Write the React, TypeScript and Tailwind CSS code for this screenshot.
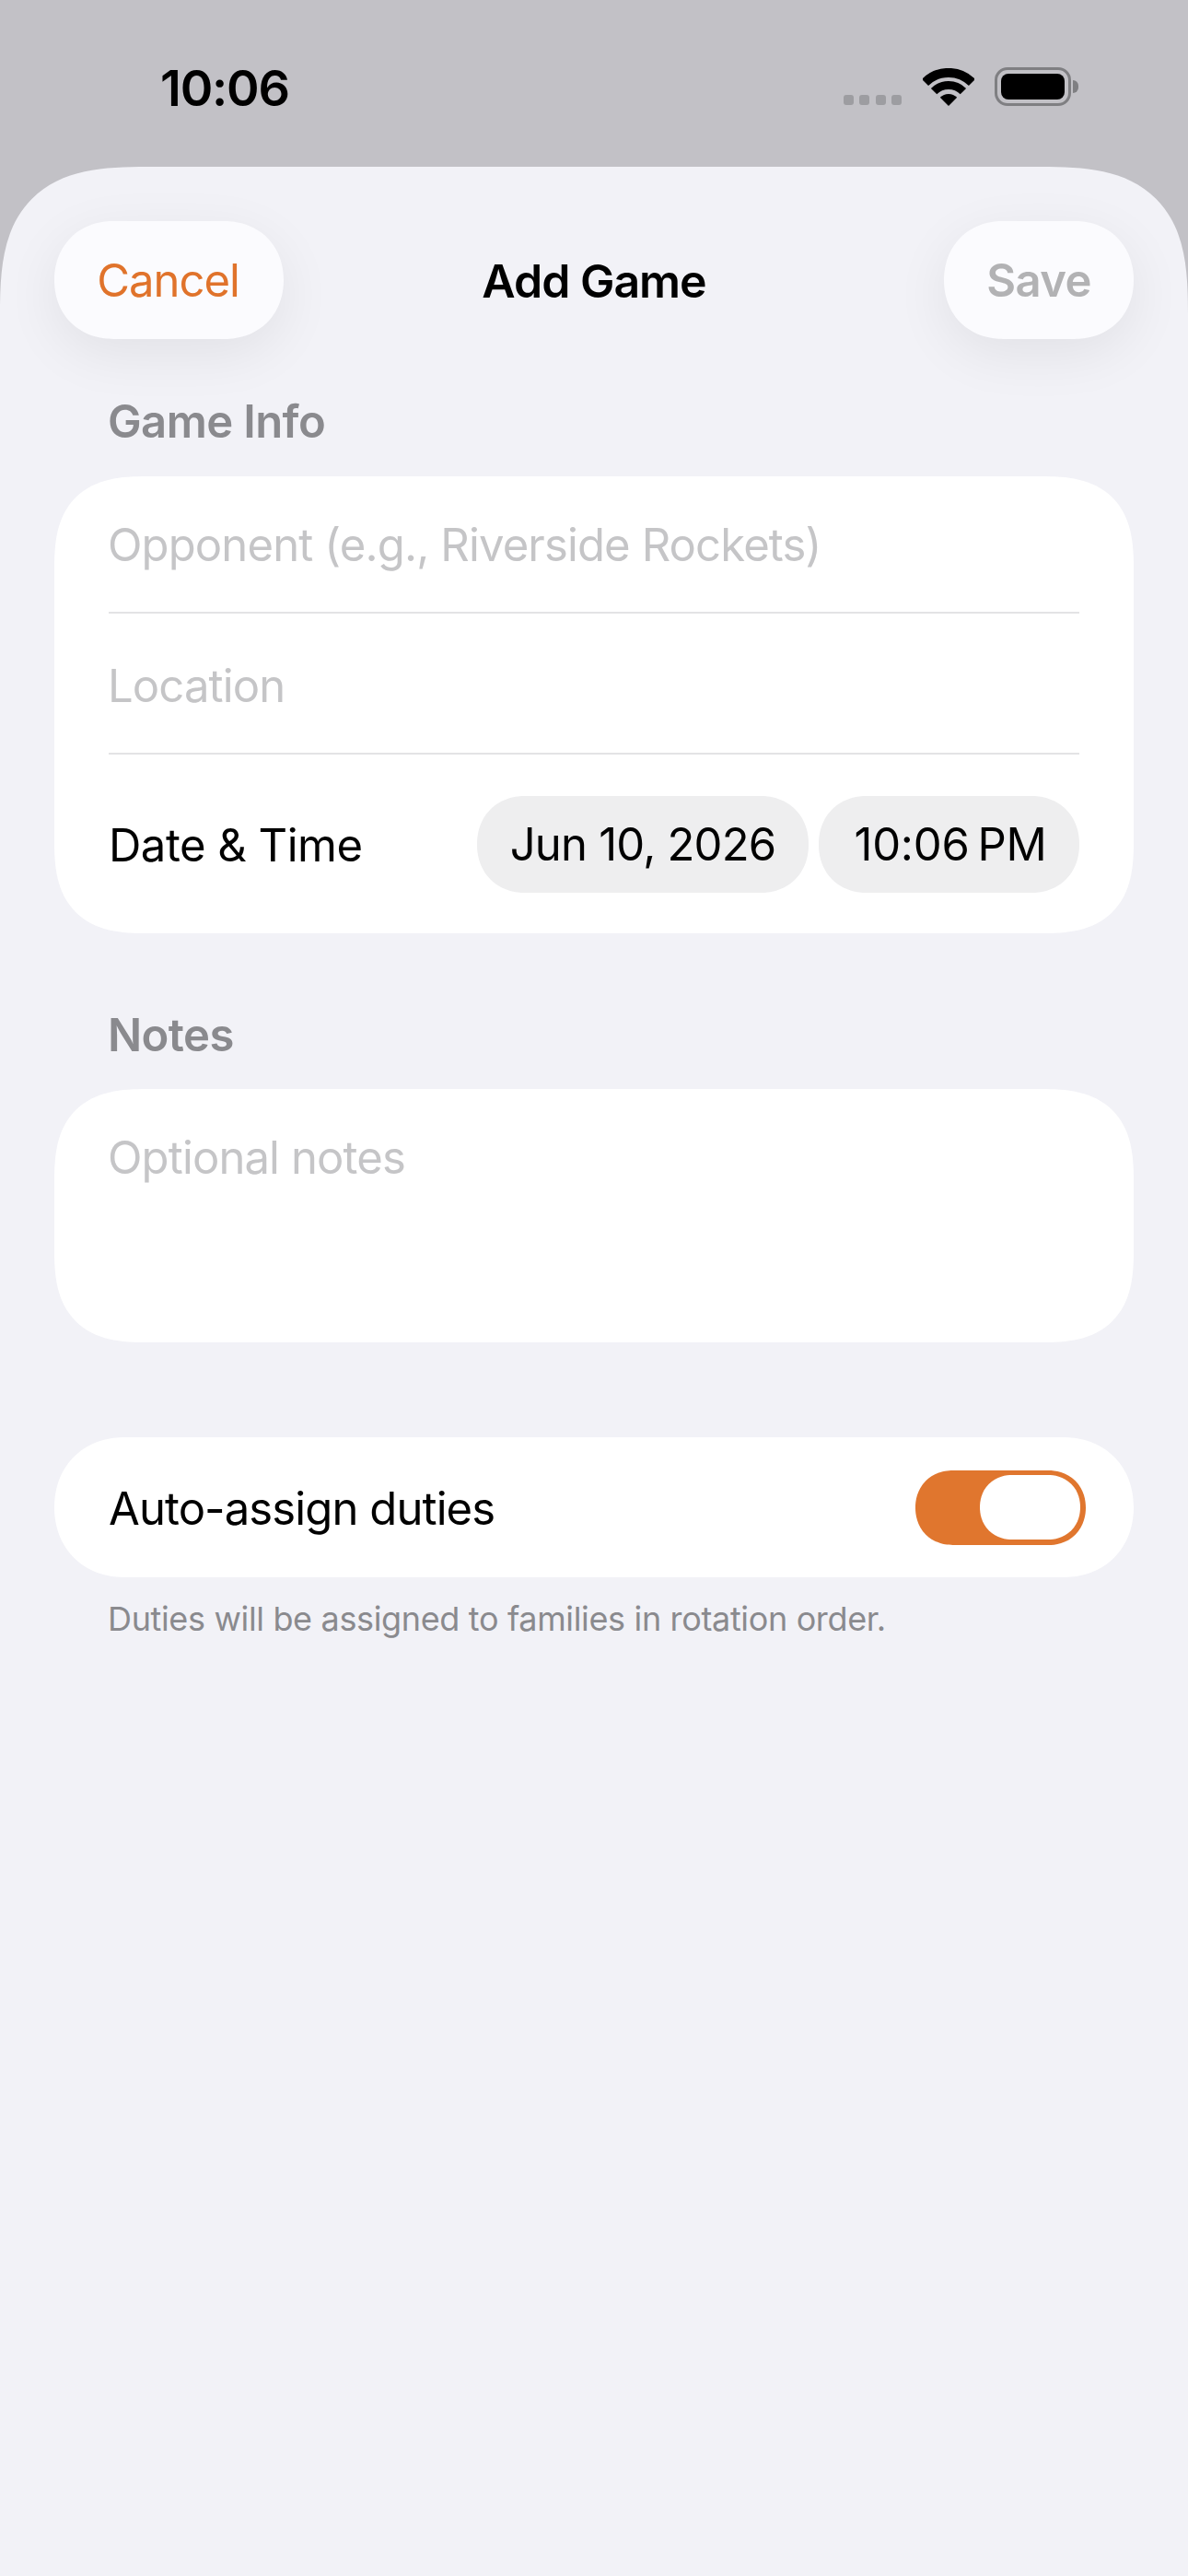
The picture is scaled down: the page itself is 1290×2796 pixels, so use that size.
const font = { fontFamily: "Inter, 'Noto Sans', sans-serif" };

const WifiIcon = () => (
  <svg width="56" height="41" viewBox="0 0 56 41" className="mt-[1px]">
    <path d="M2.5 15.5A36 36 0 0 1 53.5 15.5" fill="none" stroke="#000" strokeWidth="10" />
    <path d="M12.1 25.1A22.5 22.5 0 0 1 43.9 25.1" fill="none" stroke="#000" strokeWidth="9" />
    <path d="M28 41L18.8 31.8A13 13 0 0 1 37.2 31.8Z" fill="#000" />
  </svg>
);

const BatteryIcon = () => (
  <div className="flex items-center">
    <div className="h-[42px] w-[83px] rounded-[14px] border-[3px] border-[#7f7f82] p-[4px]">
      <div className="h-full w-full rounded-[8px] bg-black" />
    </div>
    <div className="ml-[2px] h-[14px] w-[6px] rounded-r-full bg-[#7f7f82]" />
  </div>
);

const Label = ({ children }: { children: string }) => (
  <div className="pl-[117px] text-[49px] leading-[60px] font-semibold tracking-[-0.6px] text-[#8a8a8e]">
    {children}
  </div>
);

const Placeholder = ({ children }: { children: string }) => (
  <span className="-ml-[1px] pt-[3px] text-[49px] leading-[60px] tracking-[-0.87px] text-[#c5c5c7]">{children}</span>
);

export default function App() {
  return (
    <div className="flex min-h-[2796px] w-[1290px] flex-col bg-[#c2c1c6]" style={font}>
      {/* Status bar */}
      <div className="flex h-[181px] items-start justify-between pr-[119px] pl-[174px]">
        <span className="mt-[62px] text-[54px] leading-[68px] font-semibold tracking-[-1.2px] text-black">
          10:06
        </span>
        <div className="mt-[73px] flex items-start">
          <div className="mt-[30px] flex gap-[6.5px]">
            {[0, 1, 2, 3].map((dot) => (
              <div key={dot} className="h-[11px] w-[11px] rounded-[3px] bg-[#9d9da1]" />
            ))}
          </div>
          <div className="ml-[23px]">
            <WifiIcon />
          </div>
          <div className="ml-[22px]">
            <BatteryIcon />
          </div>
        </div>
      </div>

      {/* Sheet */}
      <div className="flex-1 rounded-t-[160px] bg-[#f2f2f7] [corner-shape:superellipse(1.5)]">
        {/* Nav bar */}
        <div className="flex items-center px-[59px] pt-[59px]">
          <div className="flex flex-1 justify-start">
            <button className="h-[128px] w-[249px] rounded-[64px] bg-[#fbfbfe] pt-[2px] pr-[2px] text-[49px] tracking-[-1px] text-[#e0732b] shadow-[0_16px_60px_rgba(0,0,0,0.07)] [corner-shape:superellipse(1.08)]">
              Cancel
            </button>
          </div>
          <span className="pt-[2px] text-[50px] font-semibold tracking-[-1px] text-black">Add Game</span>
          <div className="flex flex-1 justify-end">
            <button className="h-[128px] w-[206px] rounded-[64px] bg-[#fbfbfe] pt-[2px] text-[49px] font-semibold tracking-[-0.6px] text-[#b2b2b4] shadow-[0_16px_60px_rgba(0,0,0,0.07)] [corner-shape:superellipse(1.08)]">
              Save
            </button>
          </div>
        </div>

        {/* Game Info */}
        <div className="mt-[60px]">
          <Label>Game Info</Label>
        </div>
        <div className="mx-[59px] mt-[29px] h-[496px] rounded-[100px] bg-white px-[59px] [corner-shape:superellipse(1.4)]">
          <div className="flex h-[149px] items-center border-b-2 border-[#e3e3e5]">
            <Placeholder>Opponent (e.g., Riverside Rockets)</Placeholder>
          </div>
          <div className="flex h-[153px] items-center border-b-2 border-[#e3e3e5] pt-[3px]">
            <Placeholder>Location</Placeholder>
          </div>
          <div className="flex h-[194px] items-center justify-between">
            <span className="pt-[3px] text-[49px] tracking-[-0.5px] text-black">Date &amp; Time</span>
            <div className="flex gap-[11px]">
              <div className="flex h-[105px] w-[360px] items-center justify-center rounded-[52px] bg-[#eeeeef] pt-[2px] text-[49px] tracking-[-0.8px] text-black [corner-shape:superellipse(1.08)]">
                Jun 10, 2026
              </div>
              <div className="flex h-[105px] w-[283px] items-center justify-center rounded-[52px] bg-[#eeeeef] pt-[2px] pl-[3px] text-[49px] tracking-[-0.2px] text-black [corner-shape:superellipse(1.08)]">
                10:06{"\u202F"}PM
              </div>
            </div>
          </div>
        </div>

        {/* Notes */}
        <div className="mt-[81px]">
          <Label>Notes</Label>
        </div>
        <div className="mx-[59px] mt-[28px] h-[275px] rounded-[100px] bg-white px-[59px] pt-[45px] [corner-shape:superellipse(1.4)]">
          <Placeholder>Optional notes</Placeholder>
        </div>

        {/* Auto-assign */}
        <div className="mx-[59px] mt-[103px] flex h-[152px] items-center justify-between rounded-[76px] bg-white pr-[52px] pl-[59px] [corner-shape:superellipse(1.08)]">
          <span className="pt-[3px] text-[49px] tracking-[-0.9px] text-black">Auto-assign duties</span>
          <div className="flex h-[81px] w-[185px] items-center justify-end rounded-[41px] bg-[#e0762e] pr-[6px] [corner-shape:superellipse(1.08)]">
            <div className="h-[70px] w-[109px] rounded-[35px] bg-white [corner-shape:superellipse(1.08)]" />
          </div>
        </div>
        <div className="mt-[23px] pl-[117px] text-[36px] leading-[44px] tracking-[-0.35px] text-[#8a8a8e]">
          Duties will be assigned to families in rotation order.
        </div>
      </div>
    </div>
  );
}
